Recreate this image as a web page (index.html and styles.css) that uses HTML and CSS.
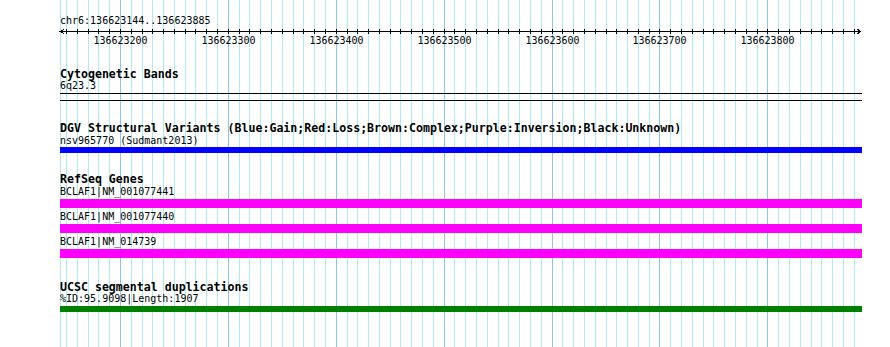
FILE: index.html
```html
<!DOCTYPE html>
<html>
<head>
<meta charset="utf-8">
<title>Genome view</title>
<link rel="stylesheet" href="styles.css">
</head>
<body>
<div class="view">
  <svg class="grid" width="890" height="347" viewBox="0 0 890 347">
    <path class="grid-light" d="M60.5 0V347M66.5 0V347M77.5 0V347M88.5 0V347M98.5 0V347M109.5 0V347M131.5 0V347M142.5 0V347M152.5 0V347M163.5 0V347M174.5 0V347M185.5 0V347M195.5 0V347M206.5 0V347M217.5 0V347M239.5 0V347M249.5 0V347M260.5 0V347M271.5 0V347M282.5 0V347M293.5 0V347M303.5 0V347M314.5 0V347M325.5 0V347M347.5 0V347M357.5 0V347M368.5 0V347M379.5 0V347M390.5 0V347M400.5 0V347M411.5 0V347M422.5 0V347M433.5 0V347M454.5 0V347M465.5 0V347M476.5 0V347M487.5 0V347M498.5 0V347M508.5 0V347M519.5 0V347M530.5 0V347M541.5 0V347M562.5 0V347M573.5 0V347M584.5 0V347M595.5 0V347M606.5 0V347M616.5 0V347M627.5 0V347M638.5 0V347M649.5 0V347M670.5 0V347M681.5 0V347M692.5 0V347M703.5 0V347M713.5 0V347M724.5 0V347M735.5 0V347M746.5 0V347M757.5 0V347M778.5 0V347M789.5 0V347M800.5 0V347M811.5 0V347M821.5 0V347M832.5 0V347M843.5 0V347M854.5 0V347"/>
    <path class="grid-dark" d="M120.5 0V347M228.5 0V347M336.5 0V347M444.5 0V347M552.5 0V347M659.5 0V347M767.5 0V347"/>
  </svg>
  <div class="content">
    <div class="ruler">
      <div class="locus">chr6:136623144..136623885</div>
      <svg class="axis" width="802" height="21" viewBox="0 0 802 21">
        <path class="axis-line" d="M0 4.5H800"/>
        <path class="axis-line" d="M4 2.5L0.5 4.5L4 6.5"/>
        <path class="axis-line" d="M797 2L800.5 4.5L797 7"/>
        <path class="axis-line" d="M6.5 2v5M17.5 2v5M28.5 2v5M38.5 2v5M49.5 2v5M60.5 2v5M71.5 2v5M82.5 2v5M92.5 2v5M103.5 2v5M114.5 2v5M125.5 2v5M135.5 2v5M146.5 2v5M157.5 2v5M168.5 2v5M179.5 2v5M189.5 2v5M200.5 2v5M211.5 2v5M222.5 2v5M233.5 2v5M243.5 2v5M254.5 2v5M265.5 2v5M276.5 2v5M287.5 2v5M297.5 2v5M308.5 2v5M319.5 2v5M330.5 2v5M340.5 2v5M351.5 2v5M362.5 2v5M373.5 2v5M384.5 2v5M394.5 2v5M405.5 2v5M416.5 2v5M427.5 2v5M438.5 2v5M448.5 2v5M459.5 2v5M470.5 2v5M481.5 2v5M492.5 2v5M502.5 2v5M513.5 2v5M524.5 2v5M535.5 2v5M546.5 2v5M556.5 2v5M567.5 2v5M578.5 2v5M589.5 2v5M599.5 2v5M610.5 2v5M621.5 2v5M632.5 2v5M643.5 2v5M653.5 2v5M664.5 2v5M675.5 2v5M686.5 2v5M697.5 2v5M707.5 2v5M718.5 2v5M729.5 2v5M740.5 2v5M751.5 2v5M761.5 2v5M772.5 2v5M783.5 2v5M794.5 2v5"/>
        <text class="axis-label" x="60.5" y="17">136623200</text>
        <text class="axis-label" x="168.5" y="17">136623300</text>
        <text class="axis-label" x="276.5" y="17">136623400</text>
        <text class="axis-label" x="384.5" y="17">136623500</text>
        <text class="axis-label" x="492.5" y="17">136623600</text>
        <text class="axis-label" x="599.5" y="17">136623700</text>
        <text class="axis-label" x="707.5" y="17">136623800</text>
      </svg>
    </div>

    <section class="track track-cyto">
      <div class="track-title">Cytogenetic Bands</div>
      <div class="feat-label">6q23.3</div>
      <div class="band"></div>
    </section>

    <section class="track track-dgv">
      <div class="track-title">DGV Structural Variants (Blue:Gain;Red:Loss;Brown:Complex;Purple:Inversion;Black:Unknown)</div>
      <div class="feat-label feat-label-dgv">nsv965770 (Sudmant2013)</div>
      <div class="bar bar-blue"></div>
    </section>

    <section class="track track-refseq">
      <div class="track-title">RefSeq Genes</div>
      <div class="feature">
        <div class="feat-label">BCLAF1|NM_001077441</div>
        <div class="bar bar-gene"></div>
      </div>
      <div class="feature">
        <div class="feat-label">BCLAF1|NM_001077440</div>
        <div class="bar bar-gene"></div>
      </div>
      <div class="feature">
        <div class="feat-label">BCLAF1|NM_014739</div>
        <div class="bar bar-gene"></div>
      </div>
    </section>

    <section class="track track-ucsc">
      <div class="track-title">UCSC segmental duplications</div>
      <div class="feat-label">%ID:95.9098|Length:1907</div>
      <div class="bar bar-green"></div>
    </section>
  </div>
</div>
</body>
</html>
```

FILE: styles.css
```css
html, body {
  margin: 0;
  padding: 0;
  background: #ffffff;
}

.view {
  position: relative;
  width: 890px;
  height: 347px;
  overflow: hidden;
  background: #ffffff;
  font-family: "DejaVu Sans Mono", "Liberation Mono", monospace;
  color: #000000;
}

.grid {
  position: absolute;
  left: 0;
  top: 0;
  z-index: 0;
}

.grid-light {
  stroke: #aeeaf0;
  stroke-width: 1;
  shape-rendering: crispEdges;
  fill: none;
}

.grid-dark {
  stroke: #88c6ec;
  stroke-width: 1;
  shape-rendering: crispEdges;
  fill: none;
}

.content {
  position: relative;
  z-index: 1;
  padding-left: 60px;
  width: 802px;
}

.ruler {
  padding-top: 15px;
}

.locus {
  font-size: 10px;
  line-height: 12px;
  white-space: nowrap;
}

.axis {
  display: block;
  overflow: visible;
}

.axis-line {
  stroke: #000000;
  stroke-width: 1;
  fill: none;
  shape-rendering: crispEdges;
}

.axis-label {
  font-family: "DejaVu Sans Mono", "Liberation Mono", monospace;
  font-size: 10px;
  fill: #000000;
  text-anchor: middle;
}

.track-title {
  font-size: 11.6px;
  font-weight: bold;
  line-height: 12px;
  white-space: nowrap;
}

.feat-label {
  font-size: 10px;
  line-height: 12px;
  white-space: nowrap;
}

.track-cyto {
  margin-top: 20px;
}

.band {
  margin-top: 1px;
  height: 6px;
  border-top: 1px solid #000000;
  border-bottom: 1px solid #000000;
}

.track-dgv {
  margin-top: 21px;
}

.feat-label-dgv {
  margin-top: 1px;
}

.bar {
  width: 802px;
}

.bar-blue {
  height: 6px;
  background: #0000ff;
}

.track-refseq {
  margin-top: 20px;
}

.feature {
  margin-top: 1px;
}

.feature + .feature {
  margin-top: 3px;
}

.bar-gene {
  margin-top: 1px;
  height: 9px;
  background: #ff00ff;
}

.track-ucsc {
  margin-top: 23px;
}

.bar-green {
  margin-top: 1px;
  height: 6px;
  background: #008000;
}
```
